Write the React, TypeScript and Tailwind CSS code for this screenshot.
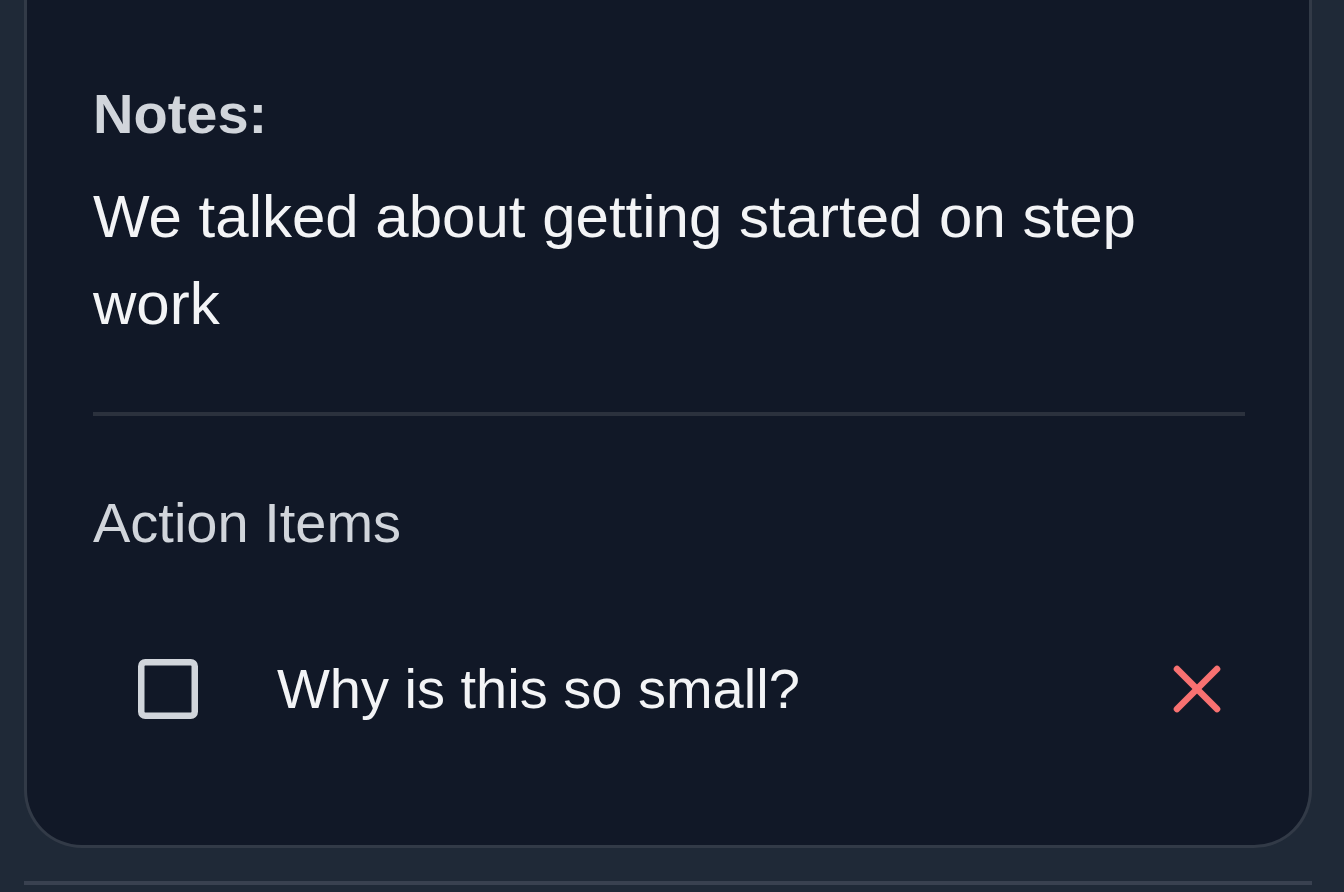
import React from 'react';

const CheckboxIcon: React.FC = () => (
  <svg width="60" height="60" viewBox="0 0 60 60" fill="none">
    <rect x="3.25" y="3.25" width="53.5" height="53.5" rx="4" stroke="#d1d5db" strokeWidth="6.5" />
  </svg>
);

const CloseIcon: React.FC = () => (
  <svg width="48" height="48" viewBox="0 0 48 48" fill="none" stroke="#f87171" strokeWidth="6.6" strokeLinecap="round">
    <path d="M4 4 L44 44" />
    <path d="M44 4 L4 44" />
  </svg>
);

const App: React.FC = () => {
  return (
    <div className="min-h-[892px] w-full bg-[#1f2937] overflow-hidden" style={{ fontFamily: '"Liberation Sans", Arial, sans-serif' }}>
      <div className="ml-[24px] w-[1288px]">
        <section className="bg-[#111827] border-x-[3px] border-b-[3px] border-[#323a47] rounded-b-[58px] pl-[66px] pr-[64px] pt-[82px] pb-[116px]">
          <h3 className="text-[56px] leading-[64px] font-bold text-[#d1d5db]">Notes:</h3>
          <p className="mt-[27px] w-[1100px] text-[60px] leading-[87px] text-[#f3f4f6]">
            We talked about getting started on step work
          </p>

          <div className="mt-[65px] h-[4px] bg-[#2b313d]" />

          <h4 className="mt-[75px] text-[56px] leading-[64px] text-[#d1d5db]">Action Items</h4>

          <div className="mt-[94px] h-[80px] flex items-center">
            <div className="ml-[45px] w-[60px] h-[60px] flex items-center justify-center">
              <CheckboxIcon />
            </div>
            <span className="ml-[79px] flex-1 text-[56px] leading-[64px] text-[#f3f4f6]">Why is this so small?</span>
            <button className="mr-[24px] w-[48px] h-[48px] flex items-center justify-center">
              <CloseIcon />
            </button>
          </div>
        </section>

        <div className="mt-[33px] h-[4px] w-[1288px] bg-[#394150]" />
      </div>
    </div>
  );
};

export default App;
